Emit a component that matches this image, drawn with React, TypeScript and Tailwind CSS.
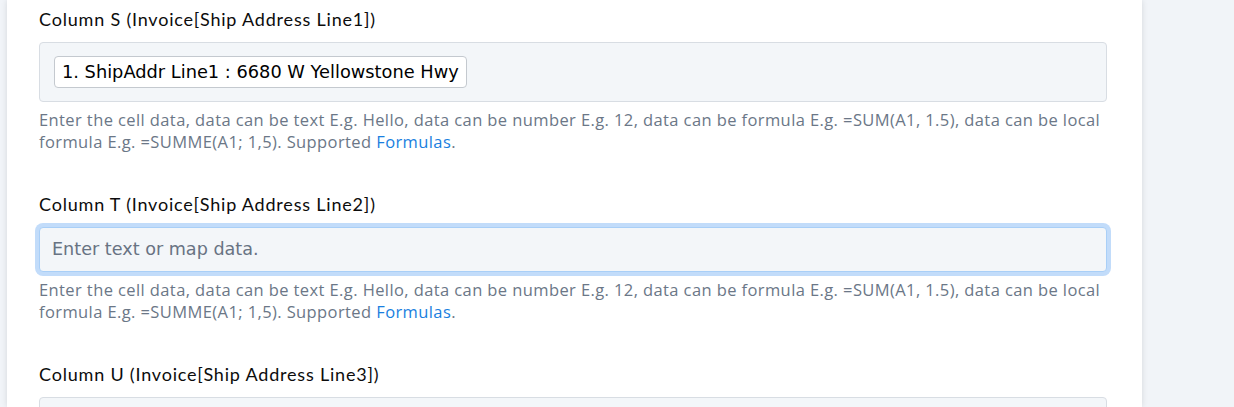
const fields = [
  { col: "S", line: "Line1", value: "1. ShipAddr Line1 : 6680 W Yellowstone Hwy" },
  { col: "T", line: "Line2", focused: true },
  { col: "U", line: "Line3" },
]

const Hint = () => (
  <p className="mt-[7px] text-[16.5px] leading-[22px] text-[#6b7787] font-['Open_Sans',sans-serif] tracking-[0.4px]">
    Enter the cell data, data can be text E.g. Hello, data can be number E.g. 12, data can be formula E.g. =SUM(A1, 1.5), data can be local
    formula E.g. =SUMME(A1; 1,5). Supported <a className="text-[#1a7fe0]">Formulas</a>.
  </p>
)

const App = () => {
  return (
    <div className="flex h-[407px] overflow-hidden bg-[#f1f4f8]">
      <div className="ml-[7px] w-[1135px] shrink-0 bg-white shadow-[0_0_6px_rgba(0,0,0,0.12)] pl-[32px] pr-[35px] pt-[8px]">
        {fields.map((f) => (
          <div key={f.col} className="mb-[40px]">
            <label className="block text-[18px] leading-[22px] font-normal tracking-[0.8px] text-[#0c0c0c] font-['Lato',sans-serif]">
              Column {f.col} (Invoice[Ship Address {f.line}])
            </label>
            {f.value ? (
              <div className="mt-[12px] h-[60px] rounded-[4px] border border-[#d8dde3] bg-[#f3f6f9] flex items-center px-[14px]">
                <span className="h-[32px] flex items-center rounded-[4px] border border-[#c4c9cf] bg-white px-[7px] text-[17.8px] text-black font-['DejaVu_Sans',sans-serif]">
                  {f.value}
                </span>
              </div>
            ) : f.focused ? (
              <div className="mt-[12px] h-[45px] rounded-[4px] border border-[#a9cff7] bg-[#f3f6f9] ring-[4px] ring-[#c2dcfa] flex items-center px-[12px] text-[17.6px] text-[#687383] font-['DejaVu_Sans',sans-serif]">
                Enter text or map data.
              </div>
            ) : (
              <div className="mt-[12px] h-[46px] rounded-[4px] border border-[#d8dde3] bg-[#f3f6f9]" />
            )}
            {(f.value || f.focused) && <Hint />}
          </div>
        ))}
      </div>
    </div>
  )
}

export default App
